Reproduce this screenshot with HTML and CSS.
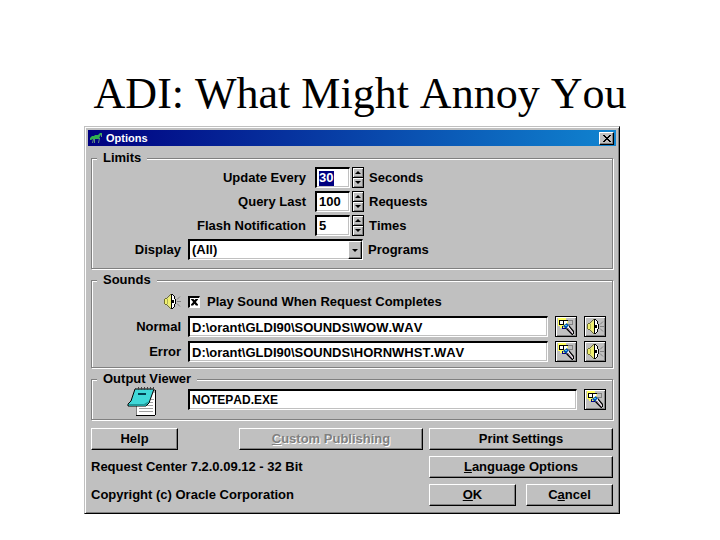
FILE: index.html
```
<!DOCTYPE html>
<html lang="en">
<head>
  <meta charset="UTF-8">
  <title>ADI: What Might Annoy You</title>
  <meta name="viewport" content="width=device-width, initial-scale=1.0">
  <link rel="stylesheet" href="styles.css">
</head>
<body>
<!-- shared icons -->
<svg class="sprite" width="0" height="0" aria-hidden="true">
  <symbol id="i-speaker" viewBox="0 0 18 18">
    <path d="M2 6h2l5-5v15l-5-5H2z" fill="#f0f070"/>
    <path d="M1 6h1v5H1zM2 5h2v1H2zM2 11h2v1H2zM4 4h1v1H4zM5 3h1v1H5zM6 2h1v1H6zM7 1h1v1H7zM4 12h1v1H4zM5 13h1v1H5zM6 14h1v1H6zM7 15h1v1H7z" fill="#707030"/>
    <path d="M4 6h1v5H4z" fill="#b0b050"/>
    <path d="M9 2h1v1h1v3h1v5h-1v3h-1v1H9z" fill="#fff"/>
    <path d="M8 1h2v1H8zM8 2h1v13H8zM8 15h2v1H8zM10 2h1v1h-1zM11 3h1v3h-1zM12 6h1v5h-1zM11 11h1v3h-1zM10 14h1v1h-1zM9 7h2v3H9z" fill="#000"/>
    <path d="M14 6.5l3-3M14 8.5h4M14 10.5l3 3" stroke="#808080" fill="none"/>
  </symbol>
  <symbol id="i-browse" viewBox="0 0 18 18">
    <path d="M1 0h8v2h2v6H8v2H3V8H1z" fill="#ffff60"/>
    <path d="M3 3h7v3H3z" fill="#fff"/>
    <path d="M2 2h9v1H2zM2 2h1v5H2zM2 6h5v1H2zM6 2h1v4H6z" fill="#000"/>
    <path d="M11 2h5v1h-5zM15 3h1v4h-1zM11 6h4v1h-4z" fill="#808080"/>
    <path d="M6 8l4-3 2 3-3 3z" fill="#0050b0"/>
    <path d="M5 8h1v2h3v1H5z" fill="#000080"/>
    <path d="M8 7h2v1H8z" fill="#40c0ff"/>
    <path d="M10 9l2-1 5 6v2h-2z" fill="#fff"/>
    <path d="M9 11l6 6h1v-1l-6-6zM12 7l5 6v3h-1v-2l-4-5z" fill="#000"/>
    <path d="M11 10l4 5" stroke="#a080a0" fill="none"/>
  </symbol>
</svg>

<h1 class="headline">ADI: What Might Annoy You</h1>

<form class="window">
  <div class="titlebar">
    <svg class="app-icon" viewBox="0 0 12 12" width="12" height="12" aria-hidden="true">
      <path d="M0 6l2-2h2l1-1h3l2-2h2v1l-2 2-1 3H3L1 8H0z" fill="#30b050"/>
      <path d="M3.5 7l-1 4M4.500 7v4M9.500 6l-1 5M11.500 2v3" stroke="#609080" fill="none"/>
    </svg>
    <span class="title">Options</span>
    <button type="button" class="close" aria-label="Close">
      <svg viewBox="0 0 8 7" width="8" height="7" shape-rendering="crispEdges"><path d="M0 0h2v1h1v1h2V1h1V0h2v1H7v1H6v1H5v1h1v1h1v1h1v1H6V6H5V5H3v1H2v1H0V6h1V5h1V4h1V3H2V2H1V1H0z"/></svg>
    </button>
  </div>

  <div class="content">
    <fieldset class="group limits">
      <legend>Limits</legend>
      <div class="row">
        <label class="label wide" for="update">Update Every</label>
        <div class="spin">
          <span class="box"><input class="number selected" id="update" type="text" value="30"></span>
          <span class="arrows">
            <button type="button" aria-label="More seconds"><i class="up"></i></button>
            <button type="button" aria-label="Fewer seconds"><i class="down"></i></button>
          </span>
        </div>
        <span class="unit">Seconds</span>
      </div>
      <div class="row">
        <label class="label wide" for="query">Query Last</label>
        <div class="spin">
          <span class="box"><input class="number" id="query" type="text" value="100"></span>
          <span class="arrows">
            <button type="button" aria-label="More requests"><i class="up"></i></button>
            <button type="button" aria-label="Fewer requests"><i class="down"></i></button>
          </span>
        </div>
        <span class="unit">Requests</span>
      </div>
      <div class="row">
        <label class="label wide" for="flash">Flash Notification</label>
        <div class="spin">
          <span class="box"><input class="number" id="flash" type="text" value="5"></span>
          <span class="arrows">
            <button type="button" aria-label="More times"><i class="up"></i></button>
            <button type="button" aria-label="Fewer times"><i class="down"></i></button>
          </span>
        </div>
        <span class="unit">Times</span>
      </div>
      <div class="row">
        <label class="label" for="display">Display</label>
        <div class="combo">
          <select class="field" id="display">
            <option>(All)</option>
          </select>
          <span class="drop"><i class="down"></i></span>
        </div>
        <span class="unit">Programs</span>
      </div>
    </fieldset>

    <fieldset class="group sounds">
      <legend>Sounds</legend>
      <div class="row play">
        <span class="label"><svg width="18" height="18" aria-hidden="true"><use href="#i-speaker"/></svg></span>
        <input class="check" id="play" type="checkbox" checked>
        <label for="play">Play Sound When Request Completes</label>
      </div>
      <div class="row">
        <label class="label" for="normal">Normal</label>
        <input class="field" id="normal" type="text" value="D:\orant\GLDI90\SOUNDS\WOW.WAV">
        <button type="button" class="tool" aria-label="Browse"><svg width="18" height="18"><use href="#i-browse"/></svg></button>
        <button type="button" class="tool" aria-label="Listen"><svg width="18" height="18"><use href="#i-speaker"/></svg></button>
      </div>
      <div class="row">
        <label class="label" for="error">Error</label>
        <input class="field" id="error" type="text" value="D:\orant\GLDI90\SOUNDS\HORNWHST.WAV">
        <button type="button" class="tool" aria-label="Browse"><svg width="18" height="18"><use href="#i-browse"/></svg></button>
        <button type="button" class="tool" aria-label="Listen"><svg width="18" height="18"><use href="#i-speaker"/></svg></button>
      </div>
    </fieldset>

    <fieldset class="group viewer">
      <legend>Output Viewer</legend>
      <div class="row">
        <span class="label notepad">
          <svg viewBox="0 0 30 29" width="30" height="29" aria-hidden="true">
            <path d="M9 6h19v22H9z" fill="#fff"/>
            <path d="M28 3h1v25h-1zM9 28h19v1H9z" fill="#000"/>
            <path d="M9 19h1v9H9zM26 2h2v2h-2z" fill="#808080"/>
            <path d="M12 21.5h14M12 24.5h14M18 18.5h8M21 15.5h5M24 12.5h3" stroke="#a0a0a0" fill="none"/>
            <path d="M8 2h19l-5 14-3 3H1v-2l3-3z" fill="#40d8d8" stroke="#000"/>
            <path d="M2 17h15l5-3-3 5H2z" fill="#209898"/>
            <path d="M8 1h1v2H8zM11 0h1v3h-1zM14 0h1v3h-1zM17 0h1v3h-1zM20 0h1v3h-1zM23 0h1v3h-1zM26 0h1v3h-1z" fill="#404040"/>
            <path d="M11 6h8v2h-8z" fill="#004050"/>
          </svg>
        </span>
        <input class="field small" type="text" aria-label="Output Viewer" value="NOTEPAD.EXE">
        <button type="button" class="tool" aria-label="Browse"><svg width="18" height="18"><use href="#i-browse"/></svg></button>
      </div>
    </fieldset>

    <div class="footer">
      <div class="left">
        <button type="button" class="btn short">Help</button>
        <button type="button" class="btn full" disabled><u>C</u>ustom Publishing</button>
      </div>
      <button type="button" class="btn">Print Settings</button>
      <span class="info">Request Center 7.2.0.09.12 - 32 Bit</span>
      <button type="button" class="btn"><u>L</u>anguage Options</button>
      <span class="info">Copyright (c) Oracle Corporation</span>
      <div class="pair">
        <button type="submit" class="btn short"><u>O</u>K</button>
        <button type="button" class="btn short">C<u>a</u>ncel</button>
      </div>
    </div>
  </div>
</form>
</body>
</html>
```
FILE: styles.css
```
* {
  box-sizing: border-box;
}
body {
  margin: 0;
  padding: 69px 0 0;
  background: #fff;
  color: #000;
  font-family: "Liberation Sans", Arial, sans-serif;
  font-size: 13px;
  font-weight: bold;
  font-kerning: none;
  line-height: 16px;
}
button, input, select {
  margin: 0;
  padding: 0;
  border-radius: 0;
  font: inherit;
  font-kerning: none;
  color: inherit;
  outline: none;
}
.sprite {
  display: block;
  height: 0;
}
.headline {
  margin: 0 0 7px;
  text-align: center;
  font-family: "Liberation Serif", "Times New Roman", serif;
  font-size: 44px;
  font-weight: normal;
  line-height: 50px;
}

/* Window frame */
.window {
  margin: 0 100px 0 84px;
  padding: 3px;
  background: #c0c0c0;
  border: 1px solid #c0c0c0;
  border-right-color: #000;
  border-bottom-color: #000;
  box-shadow: inset 1px 1px 0 #fff, inset -1px -1px 0 #808080;
}
.titlebar {
  display: flex;
  align-items: center;
  gap: 4px;
  height: 16px;
  padding: 0 2px;
  background: linear-gradient(to right, #000080, #1084d0);
  color: #fff;
  font-size: 11px;
}
.title {
  flex: 1;
}
.close {
  display: flex;
  align-items: center;
  justify-content: center;
  width: 15px;
  height: 13px;
  background: #c0c0c0;
  border: 1px solid #fff;
  border-right-color: #000;
  border-bottom-color: #000;
  color: #000;
  box-shadow: inset -1px -1px 0 #808080;
}
.content {
  padding: 4px 3px;
}

/* Groups */
.group {
  min-width: 0;
  margin: 0 0 3px;
  padding: 0 6px 0 5px;
  border: 1px solid #808080;
  box-shadow: 1px 1px 0 #fff, inset 1px 1px 0 #fff;
}
.group legend {
  padding: 0 6px;
  background: #c0c0c0;
}
.limits {
  padding-bottom: 8px;
}
.sounds {
  padding-bottom: 5px;
}
.viewer {
  margin-bottom: 8px;
  padding-bottom: 9px;
}
.row {
  display: flex;
  align-items: center;
  gap: 7px;
  min-height: 21px;
  margin-top: 3px;
}
.limits .row {
  gap: 5px;
}
.limits legend + .row {
  margin-top: 1px;
}
.sounds .row {
  margin-top: 4px;
}
.sounds legend + .row {
  margin-top: 3px;
}
.viewer legend + .row {
  margin-top: 2px;
}
.label {
  flex: none;
  width: 84px;
  text-align: right;
}
.limits .label {
  margin-right: 2px;
}
.limits .label.wide {
  width: 209px;
  margin-right: 4px;
}
.label svg {
  display: block;
  margin-left: auto;
}
.notepad {
  height: 21px;
}
.notepad svg {
  margin: -2px 24px 0 auto;
}

/* Fields */
.field, .box {
  height: 21px;
  padding: 0 2px;
  background: #fff;
  border: 1px solid #fff;
  border-top: 2px solid #000;
  border-left: 2px solid #000;
  box-shadow: inset -1px -1px 0 #c0c0c0;
}
.field {
  flex: 1;
  min-width: 0;
}
.field.small {
  font-size: 12px;
}
.spin {
  display: flex;
  gap: 2px;
}
.box {
  display: flex;
  align-items: center;
  width: 35px;
}
.number {
  width: 100%;
  height: 15px;
  background: transparent;
  border: none;
}
.number.selected {
  width: 15px;
  background: #000080;
  color: #fff;
}
.arrows {
  display: flex;
  flex-direction: column;
  width: 12px;
}
.arrows button {
  flex: 1;
  display: flex;
  align-items: center;
  justify-content: center;
  background: #c0c0c0;
  border: 1px solid #000;
  box-shadow: inset 1px 1px 0 #fff, inset -1px -1px 0 #808080;
}
.arrows button + button {
  border-top: none;
}
.up, .down {
  width: 0;
  border: 3px solid transparent;
}
.up {
  border-top: none;
  border-bottom-color: #000;
}
.down {
  border-bottom: none;
  border-top-color: #000;
}
.combo {
  display: grid;
  width: 175px;
}
.combo .field, .drop {
  grid-area: 1 / 1;
}
.combo .field {
  appearance: none;
}
.drop {
  display: flex;
  align-items: center;
  justify-content: center;
  justify-self: end;
  width: 14px;
  margin: 2px 1px 1px 0;
  background: #c0c0c0;
  border: 1px solid #fff;
  border-right-color: #000;
  border-bottom-color: #000;
  box-shadow: inset -1px -1px 0 #808080;
  pointer-events: none;
}
.check {
  appearance: none;
  display: grid;
  place-items: center;
  width: 12px;
  height: 12px;
  background: #fff;
  border: 1px solid #fff;
  border-top: 2px solid #000;
  border-left: 2px solid #000;
}
.check:checked::before {
  content: "";
  width: 7px;
  height: 7px;
  background: #000;
  clip-path: polygon(0 0, 30% 0, 50% 25%, 70% 0, 100% 0, 100% 15%, 70% 50%, 100% 85%, 100% 100%, 70% 100%, 50% 75%, 30% 100%, 0 100%, 0 85%, 30% 50%, 0 15%);
}

/* Buttons */
.tool {
  flex: none;
  display: flex;
  align-items: center;
  justify-content: center;
  width: 22px;
  height: 21px;
  background: #c0c0c0;
  border: 1px solid #000;
  box-shadow: inset 1px 1px 0 #fff, inset -1px -1px 0 #808080;
}
.btn {
  height: 22px;
  background: #c0c0c0;
  border: 1px solid #fff;
  border-right-color: #000;
  border-bottom-color: #000;
  box-shadow: inset -1px -1px 0 #808080;
}
.btn:disabled {
  color: #808080;
  text-shadow: 1px 1px 0 #fff;
}
.btn.short {
  width: 87px;
}
.btn.full {
  width: 184px;
}
.footer {
  display: grid;
  grid-template-columns: 1fr 184px;
  gap: 6px;
  align-items: center;
}
.left, .pair {
  display: flex;
  justify-content: space-between;
}
```
